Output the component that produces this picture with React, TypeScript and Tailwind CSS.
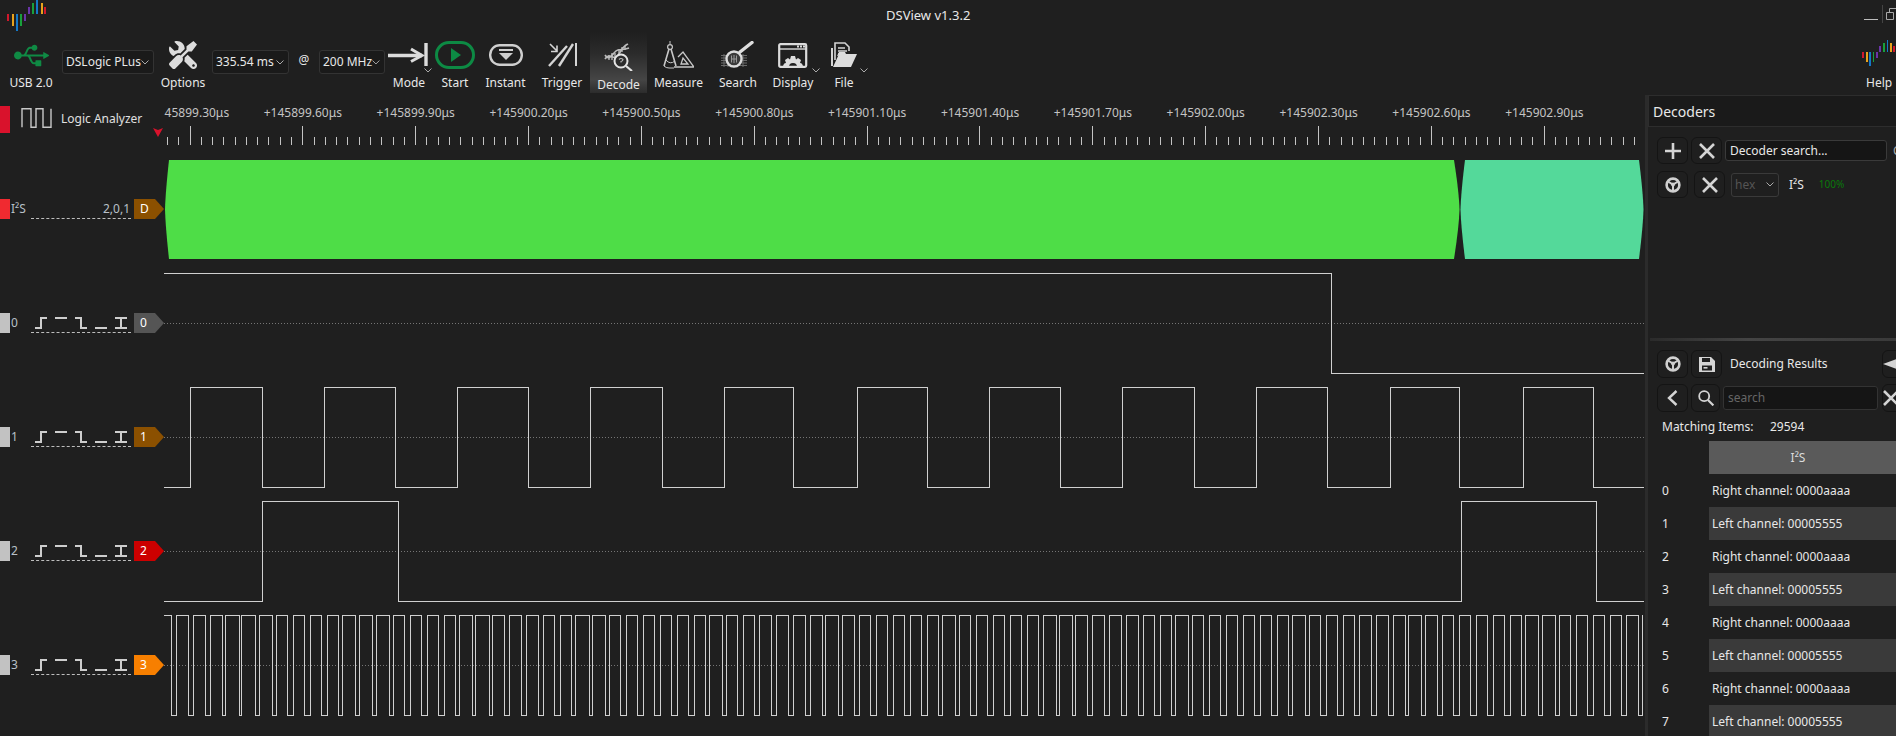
import React from "react";
import { FaUsb, FaTools } from "react-icons/fa";

const z7 = [30,43,75,87,119,131,163,170,208,214,250,260,295,304,333,349,378,393,422,437,467,477,511,521,556,565,600,610,639,654,684,698,728,743,773,782,816,824,861,869,900,913,945,957,989,1002,1031,1046,1076,1086,1121,1130,1165,1174,1204,1219,1248,1263,1292,1308,1337,1352,1381,1397,1425,1436,1470,1480,1510,1525,1553,1566];
const z8 = [56,69,100,113,145,158,190,197,232,241,274,286,315,330,360,375,404,419,449,464,493,503,537,547,577,592,621,636,665,680,710,725,755,767,800,809,843,850,883,895,927,939,971,984,1016,1028,1057,1072,1102,1112,1146,1156,1186,1201,1230,1245,1275,1290,1319,1334,1363,1378,1408,1417,1452,1462,1491,1506,1536,1551];
const z9 = [164,178,214,230,265,281,316,325,364,377,412,428,461,478,512,529,563,580,614,632,665,677,715,728,766,779,812,830,863,881,914,932,965,980,1015,1028];
const ch3Edges = [...z7.map((v) => v / 2.613 + 160), ...z8.map((v) => v / 2.613 + 750), ...z9.map((v) => v / 3 + 1300)];
const ch1Edges = [190.5,262,324,395.5,457.5,528.5,590.5,662.5,724.5,793,857.5,927.5,989.5,1060.5,1122.5,1194,1256,1327.5,1390.5,1459.5,1523,1593.5];

function wave(edges: number[], startHigh: boolean, hi: number, lo: number, end = 1644) {
  let high = startHigh;
  let d = `M164 ${(high ? hi : lo) + 0.5}`;
  for (const e of edges) {
    const x = Math.floor(e) + 0.5;
    d += ` H${x}`;
    high = !high;
    d += ` V${(high ? hi : lo) + 0.5}`;
  }
  return d + ` H${end}`;
}

function Logo({ scale = 1 }: { scale?: number }) {
  const bars: [number, number, number, string][] = [
    [0, 14, 21, "#d0182c"], [4.5, 14, 26, "#e8a21c"], [8.5, 14, 31, "#1478c8"], [12.5, 14, 26, "#18a03c"], [16.5, 14, 21, "#6a34a8"],
    [20.5, 7, 14, "#6a34a8"], [24.5, 3, 14, "#18a03c"], [29, 0, 14, "#1478c8"], [33.5, 3, 14, "#e8a21c"], [37, 7, 14, "#d0182c"],
  ];
  return (
    <svg width={39 * scale} height={31 * scale} viewBox="0 0 39 31" shapeRendering="crispEdges">
      {bars.map(([x, a, b, c]) => <rect key={x} x={x} y={a} width="2" height={b - a} fill={c} />)}
    </svg>
  );
}

function Chevron({ className = "" }: { className?: string }) {
  return (
    <svg className={className} width="8" height="5" viewBox="0 0 8 5" fill="none" stroke="#aaa" strokeWidth="1">
      <path d="M0.5 0.5 L4 4 L7.5 0.5" />
    </svg>
  );
}

function Combo({ label, w }: { label: string; w: string }) {
  return (
    <div className={`${w} h-[24px] mt-[18px] shrink-0 flex items-center justify-between pl-[3px] pr-[4px] rounded-[3px] border border-[#333] bg-[#1a1a1a] text-[12px] text-[#e8e8e8]`}>
      <span className="whitespace-nowrap">{label}</span>
      <Chevron />
    </div>
  );
}

function Tool({ label, w, icon, chevron, active }: { label: string; w: string; icon: React.ReactNode; chevron?: string; active?: boolean }) {
  return (
    <div className={`${w} relative shrink-0 flex flex-col items-center pt-[6px] ${active ? "bg-[linear-gradient(180deg,#1f1f1f_0%,#2b2b2b_35%,#454545_78%,#2c2c2c_100%)] h-[61px]" : ""}`}>
      <div className={`h-[34px] flex items-center justify-center ${active ? "translate-y-[2px]" : ""}`}>{icon}</div>
      <span className={`text-[12px] leading-[16px] text-[#e8e8e8] whitespace-nowrap ${active ? "mt-[6px]" : "mt-[3px]"}`}>{label}</span>
      {chevron && <Chevron className={`absolute top-[36px] ${chevron}`} />}
    </div>
  );
}

const ModeIcon = (
  <svg width="42" height="25" viewBox="0 0 42 25" fill="none" stroke="#dcdcdc">
    <path d="M0 12.5 H34" strokeWidth="3.5" />
    <path d="M23 6 L34 12.5 L23 18.5" strokeWidth="3" />
    <path d="M38 0 V23" strokeWidth="3.4" />
  </svg>
);
const StartIcon = (
  <svg width="40" height="28" viewBox="0 0 40 28">
    <rect x="1.5" y="1.5" width="37" height="25" rx="12.5" fill="none" stroke="#0d8a44" strokeWidth="3" />
    <path d="M16 7 L26 14 L16 21 Z" fill="#0d8a44" />
  </svg>
);
const InstantIcon = (
  <svg width="34" height="22" viewBox="0 0 34 22">
    <rect x="1.2" y="1.2" width="31.6" height="19.6" rx="9.5" fill="none" stroke="#cfcfcf" strokeWidth="2.4" />
    <rect x="10" y="5" width="14" height="2" fill="#cfcfcf" />
    <path d="M10 9 H24 L17 16 Z" fill="#cfcfcf" />
  </svg>
);
const TriggerIcon = (
  <svg width="29" height="24" viewBox="0 0 29 24" fill="none" stroke="#d4d4d4">
    <path d="M1 23 L19 3" strokeWidth="2.4" />
    <path d="M12 23 L26 1" strokeWidth="2.4" transform="translate(-1 0)" />
    <path d="M28 0 V23" strokeWidth="2" />
    <path d="M2 1 L9 8 M9 2.5 V8.5 H3" strokeWidth="1.6" />
  </svg>
);
const DecodeIcon = (
  <svg width="29" height="28" viewBox="0 0 29 28" fill="none" stroke="#bdbdbd">
    <path d="M1 16 C6 8 10 20 15 11 S22 2 24 1" strokeWidth="1.6" />
    <path d="M1 12 C6 20 9 8 14 7 S19 7 25 5" strokeWidth="1.6" />
    <path d="M5 12 V17 M8 10 V17 M11 10 V15 M15 6 V11 M18 4 V9 M21 3 V7" strokeWidth="1.3" />
    <circle cx="17" cy="18" r="6.5" fill="#2c2c2c" strokeWidth="2" stroke="#e4e4e4" />
    <path d="M22 23 L28 28" strokeWidth="2.2" stroke="#e4e4e4" />
    <path d="M15 16.5 Q17 14.5 19 16.5 Q19 18 17 18.5 V19.5" strokeWidth="1.1" />
  </svg>
);
const MeasureIcon = (
  <svg width="31" height="28" viewBox="0 0 31 28" fill="none" stroke="#c8c8c8">
    <path d="M7 0 V3" strokeWidth="1" />
    <circle cx="7" cy="6" r="2.4" strokeWidth="1.2" />
    <path d="M6 8 L1 25 M8 8 L13 25" strokeWidth="1.6" />
    <path d="M3 19 Q7 24 12 20" strokeWidth="1" />
    <path d="M11 26 H31 L20 11 L15 16 M18 23 H25 L20 17 Z" strokeWidth="1.3" />
    <path d="M1 25 Q3 27 6 27 H11" strokeWidth="1" />
  </svg>
);
const SearchIcon = (
  <svg width="34" height="28" viewBox="0 0 34 28" fill="none">
    <path d="M0 14.5 H26 M0 17 H26 M0 19.5 H26 M0 22 H26 M0 24.5 H26 M3 13 V26 M7 13 V26 M22 13 V26" stroke="#6a6a6a" strokeWidth="1" />
    <circle cx="13" cy="18" r="7.5" fill="#3a3a3a" stroke="#dcdcdc" strokeWidth="2.4" />
    <path d="M10 18 H16 M13 14 V22 M10.5 14.5 V21.5 M15.5 14.5 V21.5" stroke="#999" strokeWidth="1" />
    <path d="M19 11 L31 1.5" stroke="#dedede" strokeWidth="3.4" strokeLinecap="round" />
  </svg>
);
const DisplayIcon = (
  <svg width="30" height="25" viewBox="0 0 30 25">
    <rect x="1.2" y="1.2" width="27" height="22.6" rx="1.2" fill="none" stroke="#dcdcdc" strokeWidth="2.2" />
    <path d="M1 6 H28" stroke="#dcdcdc" strokeWidth="1.4" />
    <rect x="19" y="2.5" width="2" height="2" fill="#dcdcdc" /><rect x="22" y="2.5" width="2" height="2" fill="#dcdcdc" /><rect x="25" y="2.5" width="2" height="2" fill="#dcdcdc" />
    <path d="M5 24 C5 22 6 20 8 20 L7 17 L10 15 L12 16.5 L13 13 H17 L18 16.5 L20 15 L23 17 L22 20 C24 20 25 22 25 24 H19 A4 4 0 0 0 11 24 Z" fill="#dcdcdc" />
  </svg>
);
const FileIcon = (
  <svg width="28" height="26" viewBox="0 0 28 26" fill="none">
    <path d="M5 18 V1 H15 L19 5 V9" stroke="#d4d4d4" strokeWidth="1.6" />
    <path d="M8 6 H15 M8 9 H17 M8 12 H15" stroke="#d4d4d4" strokeWidth="1.3" />
    <path d="M2 6 V24" stroke="#d4d4d4" strokeWidth="2" />
    <path d="M3 25 L9 12 H27 L21 25 Z" fill="#dcdcdc" />
    <path d="M7 14 L9 10 H15 L16 12" fill="#dcdcdc" />
  </svg>
);
const WaveIcon = (
  <svg width="33" height="20" viewBox="0 0 33 20" fill="none" stroke="#c8c8c8" strokeWidth="1.4">
    <path d="M2 19.3 V0.7 H11 V19.3 H16 V0.7 H23 V19.3 H31 V0.7" />
  </svg>
);
const Wheel = (
  <svg width="16" height="16" viewBox="0 0 16 16">
    <circle cx="8" cy="8" r="6.4" fill="none" stroke="#cfcfcf" strokeWidth="2.6" />
    <circle cx="8" cy="7.6" r="2" fill="#cfcfcf" />
    <path d="M3 4.5 L8 7.5 L13 4.5 M8 7.5 V14" stroke="#cfcfcf" strokeWidth="2" fill="none" />
  </svg>
);
const Times = (
  <svg width="16" height="16" viewBox="0 0 16 16" stroke="#d4d4d4" strokeWidth="2.6">
    <path d="M1 1 L15 15 M15 1 L1 15" />
  </svg>
);
const Plus = (
  <svg width="16" height="16" viewBox="0 0 16 16" stroke="#d4d4d4" strokeWidth="2.6">
    <path d="M8 0 V16 M0 8 H16" />
  </svg>
);
const Save = (
  <svg width="16" height="16" viewBox="0 0 16 16">
    <path d="M0 1 H12 L16 5 V16 H0 Z M3 2 V6 H11 V2 Z M3 9.5 V14.5 H13 V9.5 Z" fill="#d4d4d4" fillRule="evenodd" />
    <rect x="4.5" y="11" width="4" height="1.6" fill="#d4d4d4" />
  </svg>
);
const Back = (
  <svg width="11" height="16" viewBox="0 0 11 16" fill="none" stroke="#d4d4d4" strokeWidth="2.4">
    <path d="M9.5 1 L2 8 L9.5 15" />
  </svg>
);
const Mag = (
  <svg width="16" height="16" viewBox="0 0 16 16" fill="none" stroke="#d4d4d4" strokeWidth="1.8">
    <circle cx="6.2" cy="6.2" r="5" />
    <path d="M10 10 L15.4 15.4" strokeWidth="2.2" />
  </svg>
);

function Btn({ children, w = "w-[31px]", h = "h-[27px]", className = "" }: { children?: React.ReactNode; w?: string; h?: string; className?: string }) {
  return (
    <div className={`${w} ${h} ${className} shrink-0 rounded-[6px] border border-[#141414] flex items-center justify-center overflow-hidden`}>
      {children}
    </div>
  );
}

const TriggerGlyphs = (
  <svg width="100" height="20" viewBox="0 0 100 20" fill="none" stroke="#cdcdcd" strokeWidth="2">
    <path d="M4 15 H10 V5 H16" />
    <path d="M24 5 H36" />
    <path d="M44 5 H50 V15 H56" />
    <path d="M64 15 H76" />
    <path d="M84 5 H96 M84 15 H96 M90 5 V15" />
  </svg>
);

function Tag({ text, color }: { text: string; color: string }) {
  return (
    <div className={`w-[30px] h-[20px] ml-[3px] shrink-0 ${color} [clip-path:polygon(0_0,21px_0,100%_50%,21px_100%,0_100%)] text-[12px] leading-[20px] pl-[6px] text-white`}>
      {text}
    </div>
  );
}

function TrackLabel({ name, tag, tagColor, barColor, groups }: { name: string; tag: string; tagColor: string; barColor: string; groups?: string }) {
  return (
    <div className="w-[164px] h-[20px] shrink-0 flex items-center">
      <div className={`w-[10px] h-[20px] shrink-0 ${barColor}`} />
      <span className="w-[21px] shrink-0 pl-[1px] text-[12px] text-[#b8c0c8] whitespace-nowrap">{name}</span>
      <div className="w-[100px] h-[20px] shrink-0 border-b border-dashed border-[#bdbdbd] flex items-center justify-end">
        {groups ? <span className="text-[12px] text-[#b8c0c8] pr-[1px]">{groups}</span> : TriggerGlyphs}
      </div>
      <Tag text={tag} color={tagColor} />
    </div>
  );
}

function Track({ top, children, label }: { top: number; children: React.ReactNode; label: React.ReactNode }) {
  return (
    <div className="h-[114px] flex items-center">
      {label}
      <svg width="1481" height="114" viewBox={`164 ${top} 1481 114`} className="shrink-0" shapeRendering="crispEdges" fill="none">
        {children}
      </svg>
    </div>
  );
}

function Dotted({ y }: { y: number }) {
  return <path d={`M164 ${y + 0.5} H1644`} stroke="#757575" strokeWidth="1" strokeDasharray="1 2" />;
}

const labels = ["+145899.30μs","+145899.60μs","+145899.90μs","+145900.20μs","+145900.50μs","+145900.80μs","+145901.10μs","+145901.40μs","+145901.70μs","+145902.00μs","+145902.30μs","+145902.60μs","+145902.90μs"];
const ticks = Array.from({ length: 131 }, (_, i) => i - 2);

const rows = Array.from({ length: 8 }, (_, i) => i);

export default function App() {
  return (
    <div className="w-[1896px] h-[736px] overflow-hidden bg-[#1f1f1f] text-[#e8e8e8] font-['Noto_Sans',sans-serif] text-[12px]">
      {/* title bar */}
      <div className="h-[32px] flex items-start">
        <div className="w-[886px] pl-[7px] shrink-0"><Logo /></div>
        <span className="text-[13px] leading-[30px] text-[#e8e8e8]">DSView v1.3.2</span>
        <div className="ml-auto flex items-start pt-[5px]">
          <div className="w-[14px] h-[1px] bg-[#bdbdbd] mt-[14px]" />
          <div className="w-[1px] h-[18px] bg-[#444] ml-[4px]" />
          <svg className="ml-[3px] mt-[2px]" width="10" height="13" viewBox="0 0 10 13" fill="none" stroke="#a8a8a8">
            <path d="M0.5 5.5 H7.5 V12.5 H0.5 Z M3.5 5 V1.5 H10" />
          </svg>
        </div>
      </div>

      {/* toolbar */}
      <div className="h-[63px] flex items-start">
        <Tool w="w-[62px]" label="USB 2.0" icon={<FaUsb className="text-[#0f8a44] text-[35px]" />} />
        <Combo w="w-[92px]" label="DSLogic PLus" />
        <Tool w="w-[58px]" label="Options" icon={<FaTools className="text-[#dcdcdc] text-[28px] -scale-x-100" />} />
        <Combo w="w-[77px]" label="335.54 ms" />
        <div className="w-[30px] shrink-0 pt-[19px] text-center text-[12px] text-[#e8e8e8]">@</div>
        <Combo w="w-[66px]" label="200 MHz" />
        <Tool w="w-[48px]" label="Mode" icon={ModeIcon} chevron="right-[1px]" />
        <Tool w="w-[44px]" label="Start" icon={StartIcon} />
        <Tool w="w-[57px]" label="Instant" icon={InstantIcon} />
        <Tool w="w-[56px]" label="Trigger" icon={TriggerIcon} />
        <Tool w="w-[57px]" label="Decode" icon={DecodeIcon} active />
        <Tool w="w-[63px]" label="Measure" icon={MeasureIcon} />
        <Tool w="w-[56px]" label="Search" icon={SearchIcon} />
        <Tool w="w-[54px]" label="Display" icon={DisplayIcon} chevron="right-[0px]" />
        <Tool w="w-[48px]" label="File" icon={FileIcon} chevron="right-[0px]" />
        <div className="ml-auto w-[34px] shrink-0 flex flex-col pt-[8px] overflow-hidden">
          <div className="h-[35px]"><Logo scale={0.85} /></div>
          <span className="pl-[4px] text-[12px] leading-[16px] text-[#e8e8e8]">Help</span>
        </div>
      </div>

      <div className="flex">
        {/* main */}
        <div className="w-[1645px] shrink-0">
          {/* ruler */}
          <div className="h-[57px] flex">
            <div className="relative w-[164px] shrink-0 flex items-start pt-[11px]">
              <div className="w-[10px] h-[27px] bg-[#d9122c] shrink-0" />
              <div className="ml-[10px] mt-[2px]">{WaveIcon}</div>
              <span className="ml-[8px] mt-[5px] text-[12px] leading-[16px] text-[#e0e0e0] whitespace-nowrap">Logic Analyzer</span>
              <svg className="absolute left-[153px] top-[33px]" width="10" height="9" viewBox="0 0 10 9"><path d="M0 0 L5 2 L10 0 L5 9 Z" fill="#d9122c" /></svg>
            </div>
            <div className="w-[1481px] shrink-0 overflow-hidden pt-[10px]">
              <div className="flex ml-[-30.43px] h-[16px]">
                {labels.map((l) => (
                  <span key={l} className="w-[112.86px] shrink-0 text-center text-[12px] leading-[16px] text-[#c4c4c4] whitespace-nowrap">{l}</span>
                ))}
              </div>
              <svg className="mt-[5px]" width="1481" height="19" viewBox="164 126 1481 19" shapeRendering="crispEdges">
                {ticks.map((k) => {
                  const x = Math.floor(190 + 11.2857 * k) + 0.5;
                  const major = k % 10 === 0;
                  return <path key={k} d={`M${x} ${major ? 126 : 137} V145`} stroke="#c4c4c4" strokeWidth="1" />;
                })}
              </svg>
            </div>
          </div>

          {/* tracks */}
          <Track top={152} label={<TrackLabel name="I²S" tag="D" tagColor="bg-[#8b5000]" barColor="bg-[#f02a30]" groups="2,0,1" />}>
            <g shapeRendering="auto">
              <path d="M169 160 H1454 Q1459 192 1459.5 209.5 Q1459 227 1454 259 H169 Q165.5 227 165 209.5 Q165.5 192 169 160 Z" fill="#4edd47" />
              <path d="M1465 160 H1639 Q1643 192 1643.5 209.5 Q1643 227 1639 259 H1465 Q1461 227 1460.5 209.5 Q1461 192 1465 160 Z" fill="#54d99a" />
            </g>
          </Track>
          <Track top={266} label={<TrackLabel name="0" tag="0" tagColor="bg-[#555555]" barColor="bg-[#c2c2c2]" />}>
            <Dotted y={323} />
            <path d={wave([1331.5], true, 273, 373)} stroke="#d0d0d0" />
          </Track>
          <Track top={380} label={<TrackLabel name="1" tag="1" tagColor="bg-[#8b5000]" barColor="bg-[#c2c2c2]" />}>
            <Dotted y={437} />
            <path d={wave(ch1Edges, false, 387, 487)} stroke="#d0d0d0" />
          </Track>
          <Track top={494} label={<TrackLabel name="2" tag="2" tagColor="bg-[#cc0000]" barColor="bg-[#c2c2c2]" />}>
            <Dotted y={551} />
            <path d={wave([262, 398.8, 1461.7, 1596.3], false, 501, 601)} stroke="#d0d0d0" />
          </Track>
          <Track top={608} label={<TrackLabel name="3" tag="3" tagColor="bg-[#f77f00]" barColor="bg-[#c2c2c2]" />}>
            <Dotted y={665} />
            <path d={wave(ch3Edges, true, 615, 715, 1643)} stroke="#d0d0d0" />
          </Track>
        </div>

        {/* right panel */}
        <div className="w-[251px] shrink-0 h-[641px] border-l-[3px] border-[#2b2b2b] flex flex-col overflow-hidden">
          <div className="h-[32px] shrink-0 bg-[#1a1a1a] border border-r-0 border-[#2d2d2d] flex items-center pl-[4px] text-[14px] text-[#e8e8e8]">Decoders</div>
          <div className="h-[211px] shrink-0 pl-[9px] pt-[10px]">
            <div className="flex h-[27px] items-center gap-[3px]">
              <Btn>{Plus}</Btn>
              <Btn>{Times}</Btn>
              <div className="w-[162px] h-[21px] shrink-0 rounded-[3px] border border-[#3a3a3a] bg-[#151515] pl-[4px] text-[12px] leading-[19px] text-[#e8e8e8]">Decoder search...</div>
              <span className="text-[12px] text-[#aaa] ml-[3px]">C</span>
            </div>
            <div className="flex h-[27px] items-center mt-[7px]">
              <Btn>{Wheel}</Btn>
              <Btn className="ml-[6px]">{Times}</Btn>
              <div className="w-[48px] h-[24px] shrink-0 ml-[6px] rounded-[3px] border border-[#3a3a3a] flex items-center justify-between pl-[3px] pr-[4px] text-[12px] text-[#555]">
                hex<Chevron />
              </div>
              <span className="ml-[10px] text-[12px] text-[#e8e8e8]">I²S</span>
              <span className="ml-[15px] text-[10px] text-[#0a7a0a]">100%</span>
            </div>
          </div>
          <div className="h-[3px] shrink-0 ml-[2px] bg-[linear-gradient(90deg,#2b2b2b,#444_40%,#3a3a3a)]" />
          <div className="pl-[9px] pt-[9px]">
            <div className="flex h-[28px] items-center">
              <Btn h="h-[28px]">{Wheel}</Btn>
              <Btn h="h-[28px]" className="ml-[3px]">{Save}</Btn>
              <span className="ml-[8px] w-[152px] shrink-0 text-[12px] text-[#e8e8e8] whitespace-nowrap">Decoding Results</span>
              <Btn h="h-[28px]">
                <svg className="mr-[16px]" width="14" height="10" viewBox="0 0 14 10"><path d="M0 5 L14 0 V10 Z" fill="#d4d4d4" /></svg>
              </Btn>
            </div>
            <div className="flex h-[28px] items-center mt-[6px]">
              <Btn h="h-[28px]">{Back}</Btn>
              <Btn h="h-[28px]" w="w-[29px]" className="ml-[3px] border-[#333]">{Mag}</Btn>
              <div className="w-[155px] h-[24px] shrink-0 ml-[3px] rounded-[3px] border border-[#333] bg-[#151515] pl-[4px] text-[12px] leading-[22px] text-[#666]">search</div>
              <Btn h="h-[28px]" className="ml-[4px]">
                <span className="mr-[14px] flex">{Times}</span>
              </Btn>
            </div>
          </div>
          <div className="h-[18px] mt-[6px] pl-[14px] flex items-center text-[12px] text-[#e8e8e8]">
            <span className="w-[108px] shrink-0">Matching Items:</span>
            <span>29594</span>
          </div>
          <div className="flex mt-[5px] h-[33px] shrink-0">
            <div className="w-[61px] shrink-0" />
            <div className="flex-1 bg-[#5a5a5a] flex items-center justify-center pr-[9px] text-[12px] text-[#dcdcdc]">I²S</div>
          </div>
          {rows.map((i) => (
            <div key={i} className="flex h-[33px] shrink-0">
              <div className="w-[61px] shrink-0 pl-[14px] text-[12px] leading-[33px] text-[#e8e8e8]">{i}</div>
              <div className={`flex-1 pl-[3px] text-[12px] leading-[33px] text-[#e8e8e8] whitespace-nowrap ${i % 2 ? "bg-[#3a3a3a]" : ""}`}>
                {i % 2 ? "Left channel: 00005555" : "Right channel: 0000aaaa"}
              </div>
            </div>
          ))}
        </div>
      </div>

      {/* text over decoded band */}
    </div>
  );
}
